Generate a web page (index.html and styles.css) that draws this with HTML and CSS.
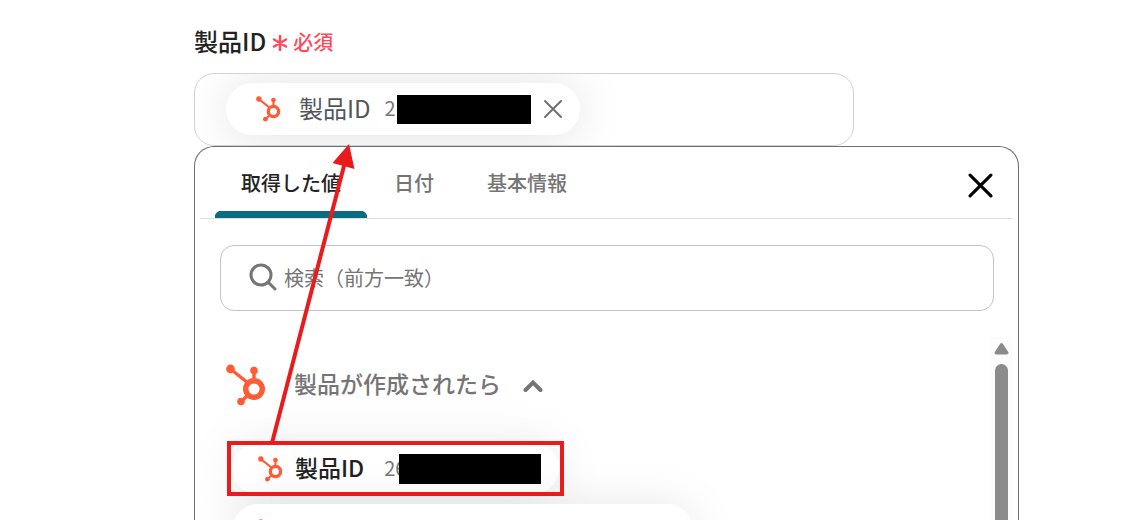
FILE: index.html
```html
<!DOCTYPE html>
<html lang="ja">
<head>
<meta charset="utf-8">
<title>製品ID</title>
<link rel="stylesheet" href="styles.css">
</head>
<body>
<svg class="defs" aria-hidden="true">
  <symbol id="sprocket" viewBox="4 4 40 42">
    <path d="M8.500 9 26 23M32 11v10M25 36l-6 5.500" fill="none" stroke="currentColor" stroke-width="3.400"/>
    <circle cx="8.500" cy="9" r="4.400" fill="currentColor"/>
    <circle cx="32" cy="10.500" r="3.800" fill="currentColor"/>
    <circle cx="19" cy="41.500" r="3.800" fill="currentColor"/>
    <circle cx="32" cy="29" r="8.300" fill="none" stroke="currentColor" stroke-width="5.400"/>
  </symbol>
</svg>
<main class="page">
  <div class="label-row">
    <span class="label" id="field-label">製品ID</span>
    <span class="required">
      <svg class="asterisk" viewBox="0 0 16 16" aria-hidden="true"><path d="M8 1v14M2 4.500l12 7M14 4.500l-12 7"/></svg>
      必須
    </span>
  </div>
  <div class="field" role="group" aria-labelledby="field-label">
    <div class="chip">
      <svg class="chip-icon" aria-hidden="true"><use href="#sprocket"/></svg>
      <span class="chip-name">製品ID</span>
      <span class="chip-value">2</span><span class="mask"></span>
      <button class="chip-remove" type="button" aria-label="削除">
        <svg viewBox="0 0 20 20" aria-hidden="true"><path d="M2 2l16 16M18 2L2 18"/></svg>
      </button>
    </div>
  </div>
  <section class="panel">
    <div class="panel-head">
      <div class="tabs" role="tablist">
        <button class="tab active" type="button" role="tab" aria-selected="true">取得した値</button>
        <button class="tab" type="button" role="tab" aria-selected="false">日付</button>
        <button class="tab" type="button" role="tab" aria-selected="false">基本情報</button>
      </div>
      <button class="close" type="button" aria-label="閉じる">
        <svg viewBox="0 0 24 24" aria-hidden="true"><path d="M2 2l20 20M22 2L2 22"/></svg>
      </button>
    </div>
    <label class="search">
      <svg class="search-icon" viewBox="0 0 28 28" aria-hidden="true"><circle cx="12" cy="12" r="10"/><path d="M19 19l7 7"/></svg>
      <input type="text" placeholder="検索（前方一致）" aria-label="検索">
    </label>
    <div class="results">
      <div class="list">
        <button class="group" type="button" aria-expanded="true">
          <svg class="group-icon" aria-hidden="true"><use href="#sprocket"/></svg>
          <span>製品が作成されたら</span>
          <svg class="chevron" viewBox="0 0 20 14" aria-hidden="true"><path d="M2.500 11L10 3.500l7.500 7.500"/></svg>
        </button>
        <button class="chip option" type="button">
          <svg class="chip-icon" aria-hidden="true"><use href="#sprocket"/></svg>
          <span class="chip-name">製品ID</span>
          <span class="chip-value">26</span><span class="mask"></span>
        </button>
        <button class="chip option wide" type="button" aria-label="製品">
          <svg class="chip-icon" aria-hidden="true"><use href="#sprocket"/></svg>
        </button>
      </div>
      <div class="scrollbar" aria-hidden="true">
        <svg class="scroll-up" viewBox="0 0 14 12"><path d="M7 2.500l5 7.500H2z"/></svg>
        <div class="thumb"></div>
      </div>
    </div>
    <svg class="callout" viewBox="0 0 380 360" aria-hidden="true">
      <rect x="34" y="296" width="333" height="51"/>
      <path class="shaft" d="M77 296L150 15"/>
      <path class="head" d="M154 -3L137.500 16l22 6z"/>
    </svg>
  </section>
</main>
</body>
</html>
```
FILE: styles.css
```css
* {
  box-sizing: border-box;
}

body {
  margin: 0;
  height: 100vh;
  overflow: hidden;
  background: #fff;
  color: #222;
  font-family: "Noto Sans CJK JP", sans-serif;
}

button {
  border: 0;
  padding: 0;
  background: none;
  color: inherit;
  font: inherit;
}

svg {
  flex: none;
}

.defs {
  position: absolute;
  width: 0;
  height: 0;
}

.page {
  display: flex;
  flex-direction: column;
  height: 100%;
  padding: 22px 128px 0 194px;
}

.label-row {
  display: flex;
  align-items: center;
  gap: 6px;
  height: 36px;
  margin-bottom: 15px;
}

.label {
  font-size: 24px;
  font-weight: 500;
}

.required {
  display: flex;
  align-items: center;
  gap: 5px;
  padding-top: 2px;
  color: #ff4a5e;
  font-size: 20px;
  font-weight: 500;
}

.asterisk {
  width: 16px;
  height: 16px;
  margin-top: 3px;
  fill: none;
  stroke: currentColor;
  stroke-width: 2.5;
  stroke-linecap: round;
}

.field {
  display: flex;
  flex: none;
  width: 80%;
  padding: 9px 31px 10px;
  overflow: hidden;
  border: 1px solid #ced2d9;
  border-radius: 20px;
}

.chip {
  display: flex;
  align-items: center;
  height: 52px;
  padding: 0 17px 0 30px;
  border-radius: 26px;
  background: #fff;
  box-shadow: 0 2px 50px rgba(0, 0, 0, 0.12);
  white-space: nowrap;
}

.chip-icon {
  width: 25px;
  height: 26px;
  color: #ff5c35;
}

.chip-name {
  margin-left: 18px;
  padding-bottom: 4px;
  color: #51565c;
  font-size: 24px;
}

.chip-value {
  margin-left: 14px;
  padding-bottom: 3px;
  color: #777;
  font-size: 20px;
}

.mask {
  width: 134px;
  height: 29px;
  margin-left: 1px;
  background: #000;
}

.chip-remove {
  display: flex;
  margin-left: 12px;
}

.chip-remove svg {
  width: 20px;
  height: 20px;
  fill: none;
  stroke: #707070;
  stroke-width: 2;
  stroke-linecap: round;
}

.panel {
  position: relative;
  display: flex;
  flex: 1;
  flex-direction: column;
  min-height: 0;
  border: 1px solid #6f6f6f;
  border-bottom: 0;
  border-radius: 20px 20px 0 0;
  background: #fff;
}

.panel-head {
  display: flex;
  align-items: stretch;
  justify-content: space-between;
  height: 72px;
  margin: 0 5px;
  padding: 0 20px 0 15px;
  border-bottom: 1px solid #e0e0e0;
}

.tabs {
  display: flex;
  gap: 1px;
}

.tab {
  padding: 0 26px;
  color: #757575;
  font-size: 20px;
  font-weight: 500;
}

.tab.active {
  color: #222;
  background: radial-gradient(circle at 7px 7px, #0b6b82 7px, transparent 8px) left bottom / 7px 7px no-repeat,
    radial-gradient(circle at 0 7px, #0b6b82 7px, transparent 8px) right bottom / 7px 7px no-repeat,
    linear-gradient(#0b6b82, #0b6b82) center bottom / calc(100% - 14px) 7px no-repeat;
}

.close {
  display: flex;
  align-items: center;
  padding-top: 6px;
}

.close svg {
  width: 25px;
  height: 25px;
  fill: none;
  stroke: #000;
  stroke-width: 3;
  stroke-linecap: round;
}

.search {
  display: flex;
  align-items: center;
  gap: 7px;
  height: 66px;
  margin: 26px 24px 0 25px;
  padding: 0 28px;
  border: 1px solid #c4c4c4;
  border-radius: 14px;
}

.search-icon {
  width: 28px;
  height: 28px;
  margin-bottom: 3px;
  fill: none;
  stroke: #757575;
  stroke-width: 3;
  stroke-linecap: round;
}

.search input {
  flex: 1;
  min-width: 0;
  padding: 0 0 2px;
  border: 0;
  outline: 0;
  background: none;
  font: 20px "Noto Sans CJK JP", sans-serif;
}

.search input::placeholder {
  color: #757575;
}

.results {
  display: flex;
  flex: 1;
  min-height: 0;
  margin-top: 26px;
  padding-right: 5px;
  overflow: hidden;
}

.list {
  display: flex;
  flex: 1;
  flex-direction: column;
  align-items: flex-start;
  gap: 10px;
  padding: 27px 37px 0;
}

.group {
  display: flex;
  align-items: center;
  height: 42px;
  margin: 0 0 27px -6px;
  color: #757575;
  font-size: 23px;
  font-weight: 500;
}

.group span {
  padding-bottom: 4px;
}

.group-icon {
  width: 40px;
  height: 42px;
  margin-right: 28px;
  color: #ff5c35;
}

.chevron {
  width: 20px;
  height: 14px;
  margin: 2px 0 0 22px;
  fill: none;
  stroke: #757575;
  stroke-width: 4;
  stroke-linecap: round;
}

.option {
  flex: none;
  height: 51px;
  padding: 0 18px 0 26px;
  box-shadow: 0 2px 50px rgba(0, 0, 0, 0.1);
}

.option .chip-name {
  margin-left: 12px;
  color: #222;
  font-size: 23px;
  font-weight: 500;
}

.option .chip-value {
  margin-left: 20px;
}

.option .mask {
  width: 142px;
  height: 30px;
  margin-left: -7px;
  z-index: 1;
}

.option.wide {
  width: 64%;
  height: 56px;
}

.scrollbar {
  display: flex;
  flex-direction: column;
  align-items: center;
  gap: 9px;
  width: 23px;
  padding-top: 5px;
  background: #fcfcfc;
}

.scroll-up {
  width: 15px;
  height: 13px;
  fill: #8b8b8b;
  stroke: #8b8b8b;
  stroke-width: 3;
  stroke-linejoin: round;
}

.thumb {
  flex: 1;
  width: 13px;
  border-radius: 7px 7px 0 0;
  background: #8b8b8b;
}

.callout {
  position: absolute;
  top: 0;
  left: 0;
  width: 380px;
  height: 360px;
  overflow: visible;
  pointer-events: none;
}

.callout rect,
.callout .shaft {
  fill: none;
  stroke: #e81c1c;
  stroke-width: 4;
}

.callout .head {
  fill: #e81c1c;
}
```
